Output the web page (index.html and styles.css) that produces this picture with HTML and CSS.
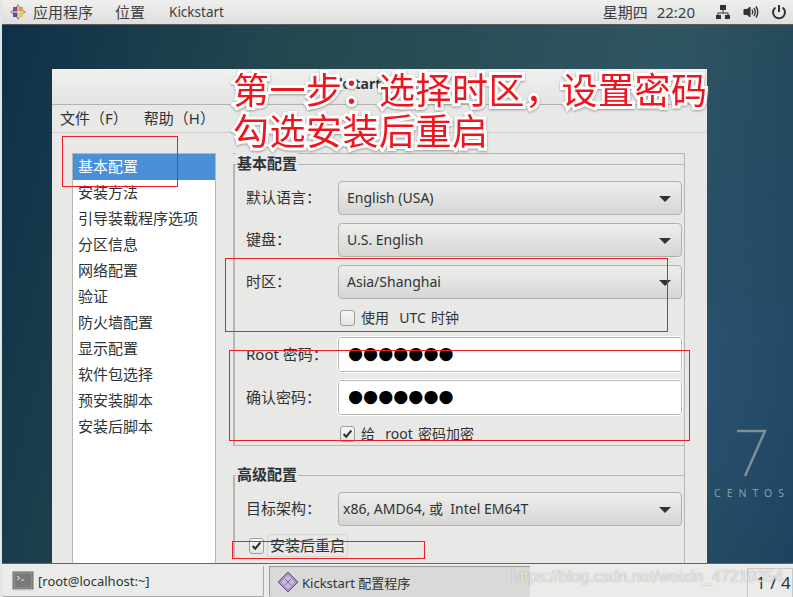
FILE: index.html
```html
<!DOCTYPE html>
<html lang="zh-CN">
<head>
    <meta charset="UTF-8">
    <meta name="viewport" content="width=device-width, initial-scale=1.0">
    <title>Kickstart 配置程序</title>
    <link rel="stylesheet" href="styles.css">
</head>
<body>

    <!-- Top panel -->
    <header class="top-panel">
        <div class="panel-left">
            <svg class="os-logo" width="16" height="16" viewBox="0 0 16 16">
                <rect x="3" y="3" width="5" height="5" fill="#9c3f8e"/>
                <rect x="8" y="3" width="5" height="5" fill="#d8a13a"/>
                <rect x="3" y="8" width="5" height="5" fill="#5c4f9e"/>
                <rect x="8" y="8" width="5" height="5" fill="#e8c64a"/>
                <path d="M8 0l2 3H6zM8 16l-2-3h4zM0 8l3-2v4zM16 8l-3 2V6z" fill="#8a8a6a"/>
                <path d="M8 2v12M2 8h12" stroke="#eee" stroke-width="1"/>
            </svg>
            <span class="panel-apps">应用程序</span>
            <span class="panel-places">位置</span>
            <span class="panel-app">Kickstart</span>
        </div>
        <div class="panel-right">
            <span class="clock">星期四 22:20</span>
            <svg width="16" height="16" viewBox="0 0 16 16" fill="#2e3436">
                <rect x="5" y="1" width="6" height="5"/>
                <rect x="1" y="11" width="5" height="4"/>
                <rect x="10" y="11" width="5" height="4"/>
                <path d="M7.500 6h1v2.500h5V11h-1V9.500h-9V11h-1V8.500h5z"/>
            </svg>
            <svg width="16" height="16" viewBox="0 0 16 16" fill="none" stroke="#2e3436">
                <path d="M1 5.500h3l3-2.500v10l-3-2.500H1z" fill="#2e3436"/>
                <path d="M9 5.500q1.500 2.500 0 5" stroke-width="1.400"/>
                <path d="M11 4q2.500 4 0 8" stroke-width="1.400"/>
                <path d="M13 2.500q3.500 5.500 0 11" stroke-width="1.400"/>
            </svg>
            <svg width="16" height="16" viewBox="0 0 16 16" fill="none" stroke="#2e3436" stroke-width="2">
                <path d="M4.500 3.500a6 6 0 1 0 7 0"/>
                <path d="M8 1v7"/>
            </svg>
        </div>
    </header>

    <!-- CentOS mark on the desktop -->
    <svg class="centos-seven" width="32" height="48" viewBox="0 0 32 48" fill="none" stroke="#7f8f98" stroke-width="2.500">
        <path d="M2 2h28L10 47"/>
    </svg>
    <div class="centos-name">CENTOS</div>

    <!-- Kickstart window -->
    <main class="window">
        <div class="titlebar">Kickstart 配置程序</div>
        <nav class="menubar">
            <span>文件（F）</span>
            <span>帮助（H）</span>
        </nav>
        <div class="window-body">
            <ul class="sidebar">
                <li class="selected">基本配置</li>
                <li>安装方法</li>
                <li>引导装载程序选项</li>
                <li>分区信息</li>
                <li>网络配置</li>
                <li>验证</li>
                <li>防火墙配置</li>
                <li>显示配置</li>
                <li>软件包选择</li>
                <li>预安装脚本</li>
                <li>安装后脚本</li>
            </ul>
            <div class="config">
                <section class="group">
                    <h2 class="group-title">基本配置</h2>
                    <div class="field">
                        <label>默认语言：</label>
                        <div class="select">English (USA)</div>
                    </div>
                    <div class="field">
                        <label>键盘：</label>
                        <div class="select">U.S. English</div>
                    </div>
                    <div class="field">
                        <label>时区：</label>
                        <div class="select">Asia/Shanghai</div>
                    </div>
                    <div class="field">
                        <span></span>
                        <div class="check">
                            <svg class="box" width="15" height="16" viewBox="0 0 15 16"></svg>
                            <span class="check-text">使用&nbsp; UTC 时钟</span>
                        </div>
                    </div>
                    <div class="field field-input">
                        <label>Root 密码：</label>
                        <div class="input">●●●●●●●</div>
                    </div>
                    <div class="field field-input">
                        <label>确认密码：</label>
                        <div class="input">●●●●●●●</div>
                    </div>
                    <div class="field">
                        <span></span>
                        <div class="check">
                            <svg class="box" width="15" height="16" viewBox="0 0 15 16">
                                <path d="M3 8l3 3 6-7" fill="none" stroke="#2e3436" stroke-width="2.400"/>
                            </svg>
                            <span class="check-text">给&nbsp; root 密码加密</span>
                        </div>
                    </div>
                </section>
                <section class="group group-advanced">
                    <h2 class="group-title">高级配置</h2>
                    <div class="field">
                        <label>目标架构：</label>
                        <div class="select select-arch">x86, AMD64, 或&nbsp; Intel EM64T</div>
                    </div>
                    <div class="check check-reboot">
                        <svg class="box" width="15" height="16" viewBox="0 0 15 16">
                            <path d="M3 8l3 3 6-7" fill="none" stroke="#2e3436" stroke-width="2.400"/>
                        </svg>
                        <span class="focus-label">安装后重启</span>
                    </div>
                </section>
            </div>
        </div>
    </main>

    <!-- Bottom task bar -->
    <footer class="taskbar">
        <div class="task">
            <svg width="22" height="20" viewBox="0 0 22 20">
                <rect x="1" y="1" width="20" height="17" fill="#8d8f8c" stroke="#6e706d"/>
                <rect x="3" y="3" width="16" height="13" fill="#777a77"/>
                <path d="M5 5l3 2-3 2M9 9h3" stroke="#e6e6e6" fill="none"/>
                <rect x="1" y="18" width="20" height="1.500" fill="#c4c4c2"/>
            </svg>
            <span>[root@localhost:~]</span>
        </div>
        <div class="task task-active">
            <svg width="22" height="22" viewBox="0 0 22 22">
                <path d="M11 1l10 10-10 10L1 11z" fill="#a48fc0" stroke="#6d5a85"/>
                <path d="M11 4l7 7-7 7-7-7z" fill="#c9bbdc"/>
                <path d="M8 8l6 6M14 8l-6 6" stroke="#7d6a98"/>
            </svg>
            <span>Kickstart 配置程序</span>
        </div>
        <div class="pager">1 / 4</div>
    </footer>

    <!-- Notes drawn on the screenshot -->
    <div class="note">第一步：选择时区，设置密码<br>勾选安装后重启</div>
    <div class="mark mark-basic"></div>
    <div class="mark mark-zone"></div>
    <div class="mark mark-password"></div>
    <div class="mark mark-reboot"></div>
    <div class="watermark">https://blog.csdn.net/weixin_47219354</div>

</body>
</html>
```

FILE: styles.css
```css
* {
    margin: 0;
    padding: 0;
    box-sizing: border-box;
}

body {
    position: relative;
    width: 793px;
    height: 597px;
    overflow: hidden;
    display: flex;
    flex-direction: column;
    justify-content: space-between;
    border-left: 2px solid #e4e4e2;
    background:
        radial-gradient(ellipse 300px 420px at 700px 380px, rgba(45, 85, 125, 0.6), transparent),
        linear-gradient(105deg, #0e2f48 0%, #25484f 32%, #2f555f 72%, #153a52 100%);
    font-family: "Noto Sans", "Noto Sans CJK TC", sans-serif;
    font-size: 14px;
    color: #2e3436;
}

/* Top panel */
.top-panel {
    display: flex;
    justify-content: space-between;
    align-items: center;
    height: 25px;
    padding: 0 6px 1px 8px;
    background: linear-gradient(#efefee, #dedede);
    border-bottom: 1px solid #5b5b5b;
    color: #3c3f41;
    font-family: "Noto Sans", "Noto Sans CJK SC", sans-serif;
}

.panel-left,
.panel-right {
    display: flex;
    align-items: center;
}

.panel-apps {
    margin-left: 7px;
    font-size: 15px;
}

.panel-places {
    margin-left: 22px;
    font-size: 15px;
}

.panel-app {
    margin-left: 24px;
    font-size: 13.500px;
}

.clock {
    margin-right: 20px;
    font-size: 15px;
    word-spacing: 5px;
}

.panel-right svg {
    margin-right: 12px;
}

.panel-right svg:last-child {
    margin-right: 0;
}

/* Desktop mark */
.centos-seven {
    position: absolute;
    left: 733px;
    top: 429px;
}

.centos-name {
    position: absolute;
    left: 712px;
    top: 486px;
    font-size: 10.500px;
    letter-spacing: 6px;
    color: #8b9ca8;
}

/* Window */
.window {
    position: absolute;
    left: 50px;
    top: 69px;
    width: 655px;
    height: 494px;
    overflow: hidden;
    background: #e8e8e7;
}

.titlebar {
    height: 36px;
    line-height: 30px;
    text-align: center;
    font-weight: 700;
    font-size: 14px;
    background: linear-gradient(#f0f0ef, #e4e4e3);
    border-bottom: 1px solid #b3b3b1;
}

.menubar {
    display: flex;
    gap: 16px;
    height: 28px;
    padding-left: 8px;
    line-height: 27px;
    font-size: 15px;
    border-bottom: 1px solid #cfcfcd;
}

.window-body {
    display: flex;
    gap: 17px;
    padding: 20px 0 0 20px;
}

.sidebar {
    width: 144px;
    height: 420px;
    list-style: none;
    background: #fff;
    border: 1px solid #b6b6b4;
    font-size: 15px;
    color: #2e3436;
}

.sidebar li {
    height: 26px;
    line-height: 25px;
    padding-left: 5px;
}

.sidebar .selected {
    background: #4a90d9;
    color: #fff;
}

/* Config pane */
.config {
    width: 452px;
    padding-top: 10px;
    border-top: 1px solid #b6b6b4;
    border-right: 1px solid #b6b6b4;
}

.group {
    position: relative;
    display: flex;
    flex-direction: column;
    gap: 8px;
    padding-top: 16px;
    border-top: 1px solid #b6b6b4;
    border-left: 2px solid #b6b6b4;
    border-bottom: 1px solid #b6b6b4;
}

.group-advanced {
    margin-top: 29px;
    border-bottom: 0;
}

.group-title {
    position: absolute;
    left: 1px;
    top: -12px;
    padding: 0 1px;
    font-size: 15px;
    line-height: 20px;
    font-weight: 700;
    background: #e8e8e7;
}

.field {
    display: grid;
    grid-template-columns: 103px 344px;
    align-items: center;
}

.field label {
    padding: 0 0 3px 11px;
    font-size: 15px;
    white-space: nowrap;
}

.select {
    position: relative;
    height: 34px;
    line-height: 32px;
    padding-left: 8px;
    border: 1px solid #b0b0ae;
    border-radius: 4px;
    background: linear-gradient(#eeeeed, #d6d6d4);
}

.select::after {
    content: "";
    position: absolute;
    right: 10px;
    top: 14px;
    border-left: 6px solid transparent;
    border-right: 6px solid transparent;
    border-top: 6px solid #2e3436;
}

.select-arch {
    padding-left: 4px;
}

.input {
    height: 35px;
    line-height: 30px;
    padding-left: 9px;
    border: 1px solid #b8b8b6;
    border-radius: 3px;
    background: #fff;
    outline: 1px solid #fff;
    font-family: "DejaVu Sans", sans-serif;
    font-size: 17.300px;
    color: #000;
}

.check {
    display: flex;
    align-items: center;
    gap: 6px;
    height: 22px;
    padding-left: 2px;
    white-space: nowrap;
}

.check-text {
    padding-bottom: 3px;
    word-spacing: 1.500px;
}

.box {
    border: 1px solid #9d9d9b;
    border-radius: 3px;
    background: linear-gradient(#f6f6f5, #e4e4e3);
}

.check-reboot {
    gap: 3px;
    height: 23px;
    margin-left: 14px;
    padding-left: 0;
    font-size: 15px;
}

.focus-label {
    padding: 0 2px;
    line-height: 21px;
    border: 1px solid #d6d6d4;
    border-radius: 2px;
}

/* Task bar */
.taskbar {
    position: relative;
    display: flex;
    height: 34px;
    padding-top: 2px;
    background: #ebebea;
    border-top: 1px solid #666;
    font-size: 13px;
}

.task {
    display: flex;
    align-items: center;
    gap: 4px;
    width: 262px;
    margin-right: 5px;
    padding-left: 10px;
    border-right: 1px solid #aaa;
    border-bottom: 1px solid #aaa;
    border-radius: 0 0 2px 2px;
}

.task-active {
    width: 261px;
    gap: 3px;
    padding-left: 7px;
    border: 0;
    border-left: 1px solid #999;
    border-top: 1px solid #999;
    background: #d9d9d8;
}

.pager {
    position: absolute;
    right: 0;
    top: 4px;
    width: 46px;
    height: 30px;
    padding-left: 8px;
    line-height: 27px;
    border: 1px solid #c8c8c6;
    font-size: 17px;
}

/* Notes on top of the screenshot */
.note {
    position: absolute;
    left: 231px;
    top: 68px;
    font-family: "Noto Sans CJK SC", sans-serif;
    font-size: 36px;
    letter-spacing: 0.500px;
    line-height: 41px;
    white-space: nowrap;
    color: #f0141e;
    -webkit-text-stroke: 6px #fff;
    paint-order: stroke fill;
    filter: drop-shadow(0 1px 1px #999);
}

.mark {
    position: absolute;
    border: 1px solid #ee1c25;
}

.mark-basic {
    left: 60px;
    top: 136px;
    width: 116px;
    height: 51px;
}

.mark-zone {
    left: 223px;
    top: 258px;
    width: 443px;
    height: 74px;
}

.mark-password {
    left: 227px;
    top: 350px;
    width: 461px;
    height: 91px;
}

.mark-reboot {
    left: 230px;
    top: 541px;
    width: 193px;
    height: 18px;
}

.watermark {
    position: absolute;
    left: 509px;
    top: 568px;
    font-family: "Liberation Sans", Arial, sans-serif;
    font-size: 16px;
    white-space: nowrap;
    color: rgba(255, 255, 255, 0.8);
    text-shadow: 0 0 1px rgba(90, 90, 90, 0.7);
}
```
